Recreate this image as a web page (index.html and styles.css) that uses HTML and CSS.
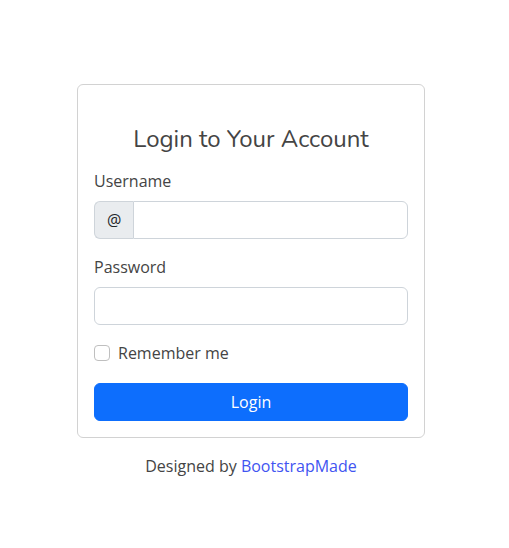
FILE: index.html
```html
<!DOCTYPE html>
<html lang="en">
<head>
<meta charset="utf-8">
<meta name="viewport" content="width=device-width, initial-scale=1">
<title>Login</title>
<link rel="stylesheet" href="styles.css">
</head>
<body>
<main class="page">
  <section class="login">
    <div class="card">
      <h1 class="card-title">Login to Your Account</h1>
      <form class="form">
        <div class="field">
          <label class="label" for="username">Username</label>
          <div class="input-group">
            <span class="prefix">@</span>
            <input class="input" id="username" name="username" type="text">
          </div>
        </div>
        <div class="field">
          <label class="label" for="password">Password</label>
          <input class="input" id="password" name="password" type="password">
        </div>
        <div class="check">
          <input class="checkbox" id="remember" name="remember" type="checkbox">
          <label for="remember">Remember me</label>
        </div>
        <button class="button" type="submit">Login</button>
      </form>
    </div>
    <p class="credits">Designed by <a class="link" href="#">BootstrapMade</a></p>
  </section>
</main>
</body>
</html>
```

FILE: styles.css
```css
* {
  box-sizing: border-box;
}

body {
  margin: 0;
  background: #fff;
  color: #444;
  font-family: "Open Sans", sans-serif;
  font-size: 16px;
  line-height: 24px;
}

.page {
  display: flex;
  align-items: center;
  justify-content: center;
  min-height: 100vh;
  padding: 22px 19px 8px 12px;
}

.login {
  width: 100%;
  max-width: 348px;
}

.card {
  padding: 40px 16px 16px;
  border: 1px solid #d2d2d2;
  border-radius: 6px;
}

.card-title {
  margin: 0 0 16px;
  font-family: Nunito, "Open Sans", sans-serif;
  font-size: 24px;
  font-weight: 400;
  line-height: 28px;
  text-align: center;
}

.form {
  display: grid;
  gap: 16px;
}

.label {
  display: block;
  margin-bottom: 8px;
}

.input-group {
  display: flex;
}

.prefix {
  padding: 6px 12px;
  border: 1px solid #ced4da;
  border-right: 0;
  border-radius: 6px 0 0 6px;
  background: #e9ecef;
  color: #212529;
}

.input {
  display: block;
  width: 100%;
  min-width: 0;
  height: 38px;
  padding: 6px 12px;
  border: 1px solid #ced4da;
  border-radius: 6px;
  background: #fff;
  color: #212529;
  font: inherit;
}

.input-group .input {
  flex: 1;
  border-radius: 0 6px 6px 0;
}

.check {
  display: flex;
  align-items: center;
  gap: 8px;
  margin-bottom: 2px;
}

.checkbox {
  appearance: none;
  width: 16px;
  height: 16px;
  margin: 0;
  border: 1px solid #bfbfbf;
  border-radius: 4px;
  background: #fff;
}

.checkbox:checked {
  background: #0d6efd;
}

.button {
  height: 38px;
  padding: 6px 12px;
  border: 1px solid #0d6efd;
  border-radius: 6px;
  background: #0d6efd;
  color: #fff;
  font: inherit;
}

.credits {
  margin: 16px 0 0;
  text-align: center;
}

.link {
  color: #4154f1;
  text-decoration: none;
}
```
